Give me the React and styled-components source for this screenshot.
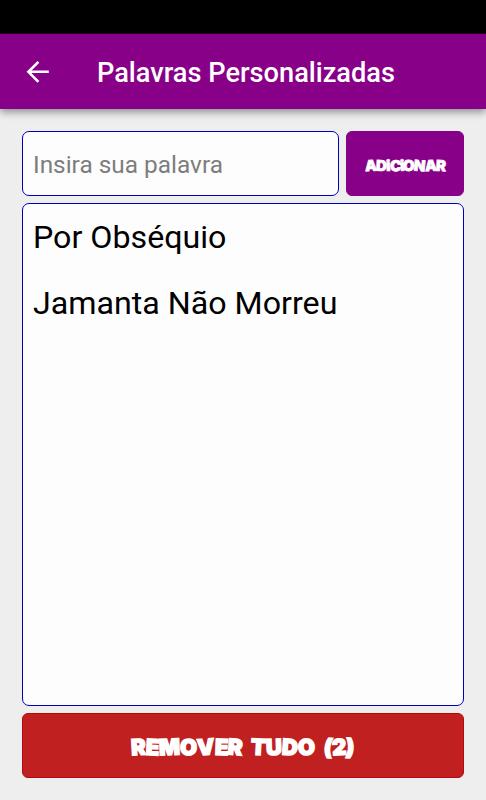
import { useState } from "react";

import styled, { createGlobalStyle } from "styled-components";

const GlobalStyle = createGlobalStyle`
  * {
    box-sizing: border-box;
  }

  body {
    margin: 0;
    font-family: Roboto, sans-serif;
    background-color: #eeeeee;
  }
`;

const Screen = styled.div`
  display: flex;
  flex-direction: column;
  height: 100vh;
  overflow: hidden;
`;

const StatusBar = styled.div`
  flex: 0 0 34px;
  background-color: #000000;
  border-bottom: 1px solid #2c002c;
`;

const Header = styled.header`
  display: flex;
  flex: 0 0 75px;
  align-items: center;
  padding-left: 26px;
  background-color: #880088;
  color: white;
  box-shadow: 0 3px 8px rgba(0, 0, 0, 0.42);
`;

const BackButton = styled.button`
  display: flex;
  width: 24px;
  height: 24px;
  margin-right: 47px;
  padding: 0;
  border: none;
  background: none;
  color: inherit;
  cursor: pointer;
`;

const Title = styled.h1`
  margin: 3px 0 0;
  font-size: 27.2px;
  font-weight: 500;
  line-height: 32px;
  white-space: nowrap;
`;

const Content = styled.main`
  display: flex;
  flex: 1;
  flex-direction: column;
  gap: 7px;
  padding: 22px 22px;
`;

const Form = styled.form`
  display: flex;
  flex: 0 0 65px;
  gap: 7px;
`;

const Input = styled.input`
  flex: 1;
  min-width: 0;
  padding: 1px 10px 0;
  border: 1px solid #0000bb;
  border-radius: 7px;
  background-color: #fdfdfd;
  font-family: inherit;
  font-size: 24.4px;
  color: #000000;

  &:focus {
    outline: none;
  }

  &::placeholder {
    color: #7d7d7d;
    opacity: 1;
  }
`;

const Button = styled.button`
  flex: 0 0 ${(props) => props.$basis};
  padding: 3px 0 0;
  border: 1px solid ${(props) => props.$border};
  border-radius: 6px;
  background-color: ${(props) => props.$color};
  color: white;
  font-family: Inter, sans-serif;
  font-size: ${(props) => props.$size};
  font-weight: 900;
  letter-spacing: ${(props) => props.$spacing};
  word-spacing: 4px;
  white-space: nowrap;
  -webkit-text-stroke: ${(props) => props.$stroke} white;
  stroke-linejoin: round;
  cursor: pointer;
`;

// Tilts a letter a little, for the hand-drawn look of the button captions
const Letter = styled.span`
  display: inline-block;
  transform: rotate(${(props) => props.$tilt}deg);
`;

const TILTS = [-3, 3, -2, 4, -4, 2, 5];

const Caption = ({ text }) => (
  <span>
    {[...text].map((char, i) =>
      char === " " ? (
        " "
      ) : (
        <Letter key={i} $tilt={TILTS[i % TILTS.length]}>
          {char}
        </Letter>
      )
    )}
  </span>
);

const WordList = styled.ul`
  flex: 1;
  margin: 0;
  padding: 0 10px;
  border: 1px solid #0000bb;
  border-radius: 7px;
  background-color: #fdfdfd;
  list-style: none;
`;

const Word = styled.li`
  height: 66px;
  padding-top: 13px;
  color: #000000;
  font-size: 32.2px;
  line-height: 40px;
  white-space: nowrap;
`;

const App = () => {
  const [word, setWord] = useState("");
  const [words, setWords] = useState(["Por Obséquio", "Jamanta Não Morreu"]);

  const handleAdd = (e) => {
    e.preventDefault();
    if (!word.trim()) return;
    setWords([...words, word.trim()]);
    setWord("");
  };

  return (
    <Screen>
      <GlobalStyle />
      <StatusBar />
      <Header>
        <BackButton aria-label="Voltar">
          <svg width="24" height="24" viewBox="0 0 24 24">
            <path
              d="M22.8 11.8H2.8M12.4 1.8L2.4 11.8l10 10"
              fill="none"
              stroke="currentColor"
              strokeWidth="2.6"
            />
          </svg>
        </BackButton>
        <Title>Palavras Personalizadas</Title>
      </Header>
      <Content>
        <Form onSubmit={handleAdd}>
          <Input
            type="text"
            placeholder="Insira sua palavra"
            value={word}
            onChange={(e) => setWord(e.target.value)}
          />
          <Button
            type="submit"
            $basis="118px"
            $color="#880088"
            $border="#880088"
            $size="15px"
            $spacing="-0.9px"
            $stroke="0.7px"
          >
            <Caption text="ADiCiONAR" />
          </Button>
        </Form>
        <WordList>
          {words.map((item) => (
            <Word key={item}>{item}</Word>
          ))}
        </WordList>
        <Button
          type="button"
          onClick={() => setWords([])}
          $basis="65px"
          $color="#c02020"
          $border="#b80808"
          $size="22px"
          $spacing="0px"
          $stroke="1.4px"
        >
          <Caption text={`REMOVER TUDO (${words.length})`} />
        </Button>
      </Content>
    </Screen>
  );
};

export default App;
